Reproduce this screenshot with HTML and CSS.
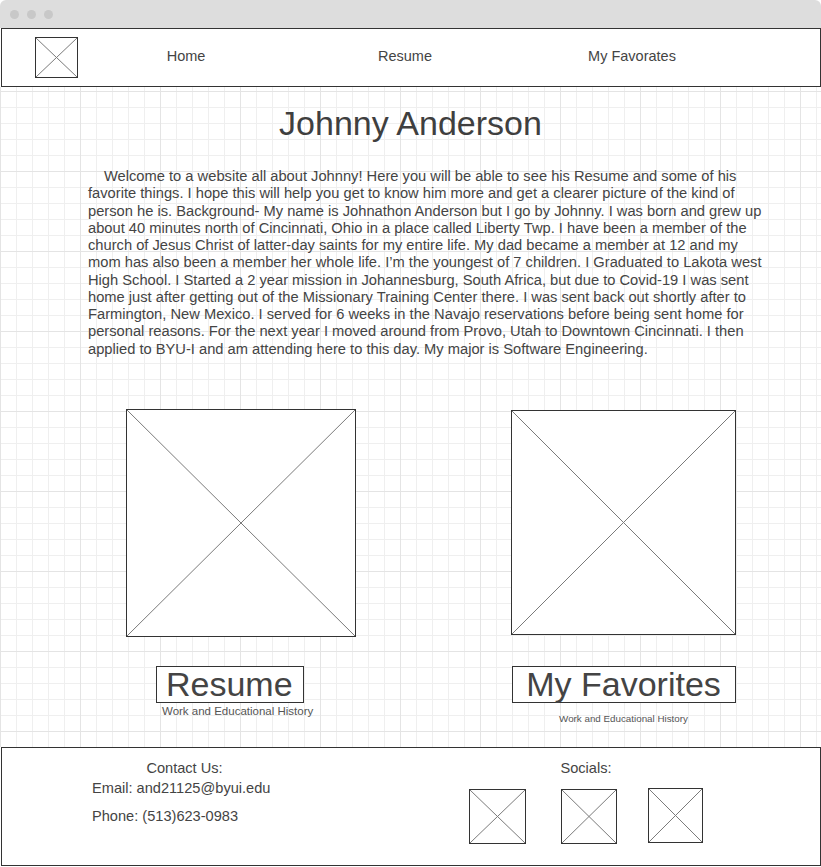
FILE: index.html
```html
<!DOCTYPE html>
<html lang="en">
<head>
<meta charset="utf-8">
<title>Johnny Anderson</title>
<link rel="stylesheet" href="styles.css">
</head>
<body>
<div class="window">
  <div class="titlebar">
    <span class="dot"></span><span class="dot"></span><span class="dot"></span>
  </div>
  <nav class="nav">
    <div class="ph logo"><svg viewBox="0 0 100 100" preserveAspectRatio="none"><path d="M0 0L100 100M100 0L0 100"/></svg></div>
    <a class="link link-home">Home</a>
    <a class="link link-resume">Resume</a>
    <a class="link link-fav">My Favorates</a>
  </nav>
  <main class="main">
    <h1 class="title">Johnny Anderson</h1>
    <p class="intro">Welcome to a website all about Johnny! Here you will be able to see his Resume and some of his favorite things. I hope this will help you get to know him more and get a clearer picture of the kind of person he is. Background- My name is Johnathon Anderson but I go by Johnny. I was born and grew up about 40 minutes north of Cincinnati, Ohio in a place called Liberty Twp. I have been a member of the church of Jesus Christ of latter-day saints for my entire life. My dad became a member at 12 and my mom has also been a member her whole life. I’m the youngest of 7 children. I Graduated to Lakota west High School. I Started a 2 year mission in Johannesburg, South Africa, but due to Covid-19 I was sent home just after getting out of the Missionary Training Center there. I was sent back out shortly after to Farmington, New Mexico. I served for 6 weeks in the Navajo reservations before being sent home for personal reasons. For the next year I moved around from Provo, Utah to Downtown Cincinnati. I then applied to BYU-I and am attending here to this day. My major is Software Engineering.</p>
    <div class="cards">
      <div class="card card-left">
        <div class="ph img-left"><svg viewBox="0 0 100 100" preserveAspectRatio="none"><path d="M0 0L100 100M100 0L0 100"/></svg></div>
        <div class="label label-left">Resume</div>
        <div class="sub sub-left">Work and Educational History</div>
      </div>
      <div class="card card-right">
        <div class="ph img-right"><svg viewBox="0 0 100 100" preserveAspectRatio="none"><path d="M0 0L100 100M100 0L0 100"/></svg></div>
        <div class="label label-right">My Favorites</div>
        <div class="sub sub-right">Work and Educational History</div>
      </div>
    </div>
  </main>
  <footer class="footer">
    <div class="contact">
      <div class="contact-head">Contact Us:</div>
      <div class="contact-line email">Email: and21125@byui.edu</div>
      <div class="contact-line phone">Phone: (513)623-0983</div>
    </div>
    <div class="socials">
      <div class="socials-head">Socials:</div>
      <div class="icons">
        <div class="ph s1"><svg viewBox="0 0 100 100" preserveAspectRatio="none"><path d="M0 0L100 100M100 0L0 100"/></svg></div>
        <div class="ph s2"><svg viewBox="0 0 100 100" preserveAspectRatio="none"><path d="M0 0L100 100M100 0L0 100"/></svg></div>
        <div class="ph s3"><svg viewBox="0 0 100 100" preserveAspectRatio="none"><path d="M0 0L100 100M100 0L0 100"/></svg></div>
      </div>
    </div>
  </footer>
</div>
</body>
</html>
```

FILE: styles.css
```css
html, body {
  margin: 0;
  padding: 0;
  background: #ffffff;
}

body {
  font-family: "Liberation Sans", Arial, sans-serif;
  color: #444444;
}

.window {
  width: 821px;
  height: 867px;
  display: flex;
  flex-direction: column;
  overflow: hidden;
}

.titlebar {
  height: 28px;
  flex: none;
  background: #dddddd;
  border-radius: 6px 6px 0 0;
  display: flex;
  align-items: center;
  gap: 8px;
  padding-left: 10px;
  box-sizing: border-box;
}

.dot {
  width: 9px;
  height: 9px;
  border-radius: 50%;
  background: #c8c8c8;
}

/* placeholder boxes */
.ph {
  box-sizing: border-box;
  border: 1px solid #333333;
  background: #ffffff;
  flex: none;
}

.ph svg {
  display: block;
  width: 100%;
  height: 100%;
}

.ph path {
  stroke: #7a7a7a;
  stroke-width: 1;
  fill: none;
  vector-effect: non-scaling-stroke;
}

/* nav */
.nav {
  height: 59px;
  flex: none;
  width: 820px;
  margin-left: 1px;
  box-sizing: border-box;
  border: 1px solid #333333;
  background: #ffffff;
  display: flex;
  align-items: center;
}

.logo {
  width: 43px;
  height: 41px;
  margin-left: 33px;
}

.link {
  width: 120px;
  text-align: center;
  font-size: 14.5px;
  line-height: 17px;
  padding-bottom: 2px;
  color: #444444;
}

.link-home { margin-left: 48px; }
.link-resume { margin-left: 99px; }
.link-fav { margin-left: 107px; }

/* main */
.main {
  flex: 1;
  display: flex;
  flex-direction: column;
  background-color: #ffffff;
  background-image:
    linear-gradient(#e4e4e4 1px, transparent 1px),
    linear-gradient(90deg, #e4e4e4 1px, transparent 1px),
    linear-gradient(#efefef 1px, transparent 1px),
    linear-gradient(90deg, #efefef 1px, transparent 1px);
  background-size: 80px 80px, 80px 80px, 16px 16px, 16px 16px;
  background-position: 0 4px, 0 4px, 0 4px, 0 4px;
}

.title {
  margin: 16px 0 0;
  font-size: 34px;
  line-height: 40px;
  font-weight: normal;
  text-align: center;
  color: #3f3f3f;
}

.intro {
  margin: 25px 0 0 88px;
  width: 677px;
  font-size: 14.7px;
  line-height: 17.25px;
  text-indent: 16px;
  color: #444444;
}

.cards {
  display: flex;
  align-items: flex-start;
  padding-left: 126px;
  margin-top: 51px;
}

.card {
  display: flex;
  flex-direction: column;
}

.card-left {
  width: 230px;
  align-items: flex-start;
}

.card-right {
  width: 225px;
  margin-left: 155px;
  align-items: center;
}

.img-left {
  width: 230px;
  height: 228px;
}

.img-right {
  width: 225px;
  height: 225px;
  margin-top: 1px;
}

.label {
  box-sizing: border-box;
  height: 37px;
  border: 1px solid #333333;
  background: #ffffff;
  font-size: 34px;
  line-height: 35px;
  color: #444444;
  white-space: nowrap;
}

.label-left {
  width: 148px;
  margin-top: 29px;
  margin-left: 30px;
  padding-left: 9px;
}

.label-right {
  width: 224px;
  margin-top: 31px;
  text-align: center;
}

.sub {
  color: #555555;
  white-space: nowrap;
}

.sub-left {
  font-size: 11.5px;
  line-height: 13px;
  margin-left: 36px;
  margin-top: 2px;
}

.sub-right {
  font-size: 9.8px;
  line-height: 12px;
  margin-top: 10px;
}

/* footer */
.footer {
  height: 119px;
  flex: none;
  width: 820px;
  margin-left: 1px;
  margin-bottom: 1px;
  box-sizing: border-box;
  border: 1px solid #333333;
  background: #ffffff;
  display: flex;
  align-items: flex-start;
  font-size: 14.6px;
  color: #444444;
}

.contact {
  width: 185px;
  margin-left: 90px;
  padding-top: 11px;
}

.contact-head {
  text-align: center;
  line-height: 18px;
}

.contact-line {
  line-height: 18px;
}

.email { margin-top: 2px; }
.phone { margin-top: 10px; }

.socials {
  width: 240px;
  margin-left: 189px;
  padding-top: 11px;
}

.socials-head {
  text-align: center;
  line-height: 18px;
}

.icons {
  display: flex;
  align-items: flex-start;
  margin-top: 12px;
  padding-left: 3px;
}

.s1 { width: 57px; height: 55px; }
.s2 { width: 56px; height: 55px; margin-left: 35px; }
.s3 { width: 55px; height: 55px; margin-left: 31px; margin-top: -1px; }
```
